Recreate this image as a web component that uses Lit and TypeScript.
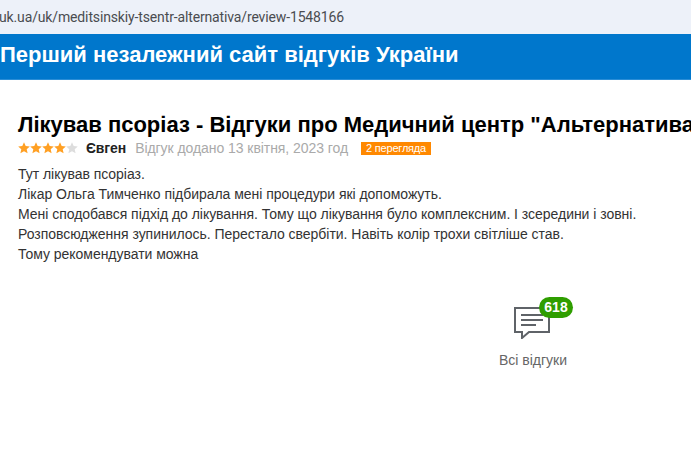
import { LitElement, html, css, svg } from "lit";
import { customElement } from "lit/decorators.js";

const star = (x: number, fill: string) => svg`<path fill=${fill} transform="translate(${x} 0)" d="M6 .2l1.7 3.8 4.1.4-3.1 2.8.9 4.1L6 9.2 2.4 11.3l.9-4.1L.2 4.4l4.1-.4z"/>`;

@customElement("app-root")
export class AppRoot extends LitElement {
  static styles = css`
    :host { display: block; width: 691px; height: 460px; overflow: hidden; background: #fff; font-family: "Liberation Sans", Arial, sans-serif; }
    .url { height: 34px; background: #edf1f9; color: #4a4c50; font-size: 14px; line-height: 34px; white-space: nowrap; font-family: "Roboto", sans-serif; letter-spacing: -.14px; }
    .url span { margin-left: -1px; display: inline-block; }
    .bar { height: 46px; box-sizing: border-box; background: #0077cc; border-bottom: 1px solid #2a8dd6; color: #fff; font-size: 22px; font-weight: 700; line-height: 41px; padding-left: 0; }
    .main { padding: 32px 0 0 18px; white-space: nowrap; }
    h1 { margin: 0; font-size: 22px; line-height: 25px; color: #000; font-weight: 700; }
    .meta { display: flex; align-items: center; height: 16px; margin-top: 3px; font-size: 14px; }
    .stars { width: 60px; height: 12px; display: block; }
    .author { font-weight: 700; color: #222; margin-left: 8px; letter-spacing: -.1px; }
    .date { color: #aaa; margin-left: 9px; letter-spacing: -.06px; }
    .views { background: #ff8800; color: #fff; font-size: 11px; line-height: 13px; padding: 0 5px; margin-left: 13px; margin-top: 1px; letter-spacing: -.2px; }
    .body { margin-top: 8px; font-size: 14px; line-height: 20px; color: #333; letter-spacing: -.03px; }
    .all { width: 140px; margin: 33px 0 0 445px; display: flex; flex-direction: column; align-items: center; color: #666; font-size: 14px; }
    .icon { position: relative; width: 70px; height: 42px; }
    .icon svg { position: absolute; left: 15px; top: 8px; }
    .count { position: absolute; left: 41px; top: 0; width: 34px; height: 21px; border-radius: 11px; background: #2f9e00; color: #fff; font-size: 14px; font-weight: 700; line-height: 20px; text-align: center; }
    .label { margin-top: 13px; line-height: 16px; }
  `;

  render() {
    return html`
      <div class="url"><span>uk.ua/uk/meditsinskiy-tsentr-alternativa/review-1548166</span></div>
      <div class="bar">Перший незалежний сайт відгуків України</div>
      <div class="main">
        <h1>Лікував псоріаз - Відгуки про Медичний центр "Альтернатива"</h1>
        <div class="meta">
          <svg class="stars" viewBox="0 0 60 12">
            ${star(0, "#ffa024")}${star(12, "#ffa024")}${star(24, "#ffa024")}${star(36, "#ffa024")}${star(48, "#dddddd")}
          </svg>
          <span class="author">Євген</span>
          <span class="date">Відгук додано 13 квітня, 2023 год</span>
          <span class="views">2 перегляда</span>
        </div>
        <div class="body">
          Тут лікував псоріаз.<br>
          Лікар Ольга Тимченко підбирала мені процедури які допоможуть.<br>
          Мені сподобався підхід до лікування. Тому що лікування було комплексним. І зсередини і зовні.<br>
          Розповсюдження зупинилось. Перестало свербіти. Навіть колір трохи світліше став.<br>
          Тому рекомендувати можна
        </div>
        <div class="all">
          <div class="icon">
            <svg width="38" height="34" viewBox="0 0 38 34" fill="none" stroke="#5f6368">
              <path stroke-width="2" d="M2 3h34v24H16l-7 6v-6H2z"/>
              <path stroke-width="2" d="M8 10h22M8 15h22M8 20h15"/>
            </svg>
            <div class="count">618</div>
          </div>
          <div class="label">Всі відгуки</div>
        </div>
      </div>
    `;
  }
}
